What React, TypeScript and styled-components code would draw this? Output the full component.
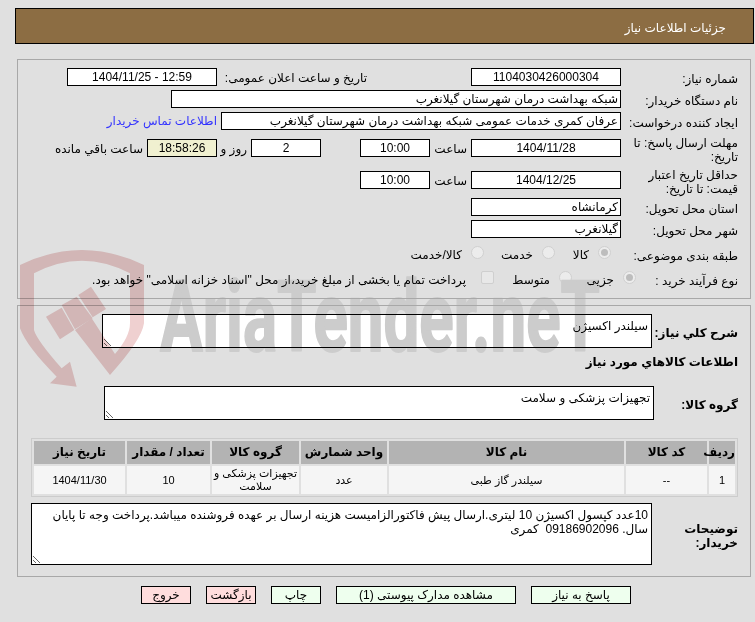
import React from 'react'
import styled, { createGlobalStyle } from 'styled-components'

const Global = createGlobalStyle`
  html, body { margin: 0; padding: 0; background: #e0e0e0; }
  body { font-family: "Liberation Sans", "DejaVu Sans", sans-serif; font-size: 12px; color: #000; }
  * { box-sizing: border-box; }
`

const Page = styled.div`
  position: relative;
  width: 755px;
  height: 622px;
  overflow: hidden;
  direction: rtl;
  padding: 8px 1px 0 15px;
`

// sits over the whole form, the fields show through it
const Watermark = styled.svg<{ $blend: string }>`
  position: absolute;
  left: 0;
  top: 0;
  width: 755px;
  height: 622px;
  pointer-events: none;
  mix-blend-mode: ${(p) => p.$blend};
`

const Header = styled.div`
  height: 36px;
  background: #8c6d43;
  border: 1px solid #000;
  color: #fff;
  line-height: 38px;
  padding-right: 27px;
`

const Panel = styled.div`
  margin: 15px 3px 0 2px;
  border: 1px solid #a8a8a8;
  padding: 8px 12px 0 0;
  height: 240px;
`

const LowerPanel = styled(Panel)`
  margin-top: 6px;
  height: 272px;
`

const Row = styled.div<{ $h?: number; $mt?: number }>`
  display: flex;
  align-items: center;
  height: ${(p) => p.$h ?? 18}px;
  margin-top: ${(p) => p.$mt ?? 4}px;
  &:first-child { margin-top: 0; }
`

const Label = styled.div<{ $w?: number; $bold?: boolean }>`
  flex: none;
  width: ${(p) => p.$w ?? 117}px;
  font-weight: ${(p) => (p.$bold ? 700 : 400)};
  line-height: 14px;
  padding-top: 3px;
`

const Field = styled.div<{ $w: number; $center?: boolean; $bg?: string; $mr?: number }>`
  flex: none;
  width: ${(p) => p.$w}px;
  height: 18px;
  margin-right: ${(p) => p.$mr ?? 0}px;
  border: 1px solid #000;
  background: ${(p) => p.$bg ?? '#fff'};
  line-height: 16px;
  padding: 0 2px;
  text-align: ${(p) => (p.$center ? 'center' : 'right')};
  white-space: nowrap;
  overflow: hidden;
`

const Inline = styled.div<{ $w: number; $mr?: number }>`
  flex: none;
  width: ${(p) => p.$w}px;
  margin-right: ${(p) => p.$mr ?? 0}px;
  padding: 2px 4px 0 0;
  white-space: nowrap;
`

const ContactLink = styled.a`
  margin-right: 4px;
  color: #3333ff;
  white-space: nowrap;
`

const Option = styled.label<{ $w: number; $gap?: number }>`
  flex: none;
  width: ${(p) => p.$w}px;
  display: flex;
  align-items: center;
  gap: ${(p) => p.$gap ?? 9}px;
  padding-top: 2px;
  white-space: nowrap;
`

const Radio = styled.input.attrs({ type: 'radio', disabled: true })`
  appearance: none;
  flex: none;
  position: relative;
  width: 13px;
  height: 13px;
  margin: 0 0 6px;
  border: 1px solid #d0d0d0;
  border-radius: 50%;
  background: #ececec;
  &:checked::after {
    content: '';
    position: absolute;
    inset: 2px;
    border-radius: 50%;
    background: #bdbdbd;
  }
`

const Check = styled.input.attrs({ type: 'checkbox', disabled: true })`
  appearance: none;
  flex: none;
  width: 13px;
  height: 13px;
  margin: 0 0 6px;
  border: 1px solid #cfcfcf;
  border-radius: 2px;
  background: #e8e8e8;
`

const Note = styled.textarea.attrs({ readOnly: true })<{ $w: number; $h: number }>`
  flex: none;
  display: block;
  width: ${(p) => p.$w}px;
  height: ${(p) => p.$h}px;
  border: 1px solid #000;
  border-radius: 0;
  background: #fff;
  padding: 4px 3px;
  font: inherit;
  line-height: 14px;
  color: #000;
  overflow: hidden;
  outline: none;
`

const SectionTitle = styled.div`
  margin-top: 6px;
  height: 16px;
  line-height: 16px;
  font-weight: 700;
`

const Items = styled.table`
  width: 707px;
  margin-top: 18px;
  table-layout: fixed;
  border-collapse: separate;
  border-spacing: 2px;
  border: 1px solid #cccccc;
  line-height: 13px;
  th {
    height: 23px;
    padding: 0;
    background: #b3b3b3;
    font-weight: 700;
  }
  td {
    height: 28px;
    padding: 0;
    background: #f5f5f5;
    font-size: 11px;
    text-align: center;
    white-space: pre;
  }
`

const Footer = styled.div`
  display: flex;
  gap: 15px;
  margin-top: 9px;
  padding-right: 123px;
`

const ActionButton = styled.button<{ $w: number; $danger?: boolean }>`
  width: ${(p) => p.$w}px;
  height: 18px;
  padding: 0;
  border: 1px solid #000;
  border-radius: 0;
  background: ${(p) => (p.$danger ? '#ffdddd' : '#eeffee')};
  font: inherit;
  color: #000;
  white-space: nowrap;
`

const columns = [26, 81, 235, 86, 87, 83, 91]
const heads = ['ردیف', 'کد کالا', 'نام کالا', 'واحد شمارش', 'گروه کالا', 'تعداد / مقدار', 'تاریخ نیاز']
const cells = ['1', '--', 'سیلندر گاز طبی', 'عدد', 'تجهیزات پزشکی و\nسلامت', '10', '1404/11/30']

export default function App() {
  return (
    <Page>
      <Global />
      <Header>جزئیات اطلاعات نیاز</Header>
      <Panel>
        <Row>
          <Label>شماره نیاز:</Label>
          <Field $w={150} $center>1104030426000304</Field>
          <Inline $w={154} $mr={100}>تاریخ و ساعت اعلان عمومی:</Inline>
          <Field $w={150} $center>12:59 - 1404/11/25</Field>
        </Row>
        <Row>
          <Label>نام دستگاه خریدار:</Label>
          <Field $w={450}>شبکه بهداشت درمان شهرستان گیلانغرب</Field>
        </Row>
        <Row>
          <Label>ایجاد کننده درخواست:</Label>
          <Field $w={400}>عرفان کمری خدمات عمومی شبکه بهداشت درمان شهرستان گیلانغرب</Field>
          <ContactLink>اطلاعات تماس خریدار</ContactLink>
        </Row>
        <Row $h={32} $mt={2}>
          <Label>مهلت ارسال پاسخ: تا تاریخ:</Label>
          <Field $w={150} $center>1404/11/28</Field>
          <Inline $w={41}>ساعت</Inline>
          <Field $w={70} $center>10:00</Field>
          <Field $w={70} $center $mr={39}>2</Field>
          <Inline $w={34}>روز و</Inline>
          <Field $w={70} $center $bg="#f0f0d0">18:58:26</Field>
          <Inline $w={94}>ساعت باقي مانده</Inline>
        </Row>
        <Row $h={32} $mt={0}>
          <Label>حداقل تاریخ اعتبار قیمت: تا تاریخ:</Label>
          <Field $w={150} $center>1404/12/25</Field>
          <Inline $w={41}>ساعت</Inline>
          <Field $w={70} $center>10:00</Field>
        </Row>
        <Row $mt={2}>
          <Label>استان محل تحویل:</Label>
          <Field $w={150}>کرمانشاه</Field>
        </Row>
        <Row>
          <Label>شهر محل تحویل:</Label>
          <Field $w={150}>گیلانغرب</Field>
        </Row>
        <Row $mt={7}>
          <Label $w={127}>طبقه بندی موضوعی:</Label>
          <Option $w={56}><Radio defaultChecked name="kind" />کالا</Option>
          <Option $w={71}><Radio name="kind" />خدمت</Option>
          <Option $w={80}><Radio name="kind" />کالا/خدمت</Option>
        </Row>
        <Row $mt={7}>
          <Label $w={102}>نوع فرآیند خرید :</Label>
          <Option $w={64}><Radio defaultChecked name="process" />جزیی</Option>
          <Option $w={78}><Radio name="process" />متوسط</Option>
          <Option $w={400} $gap={15}>
            <Check />
            پرداخت تمام یا بخشی از مبلغ خرید،از محل "اسناد خزانه اسلامی" خواهد بود.
          </Option>
        </Row>
      </Panel>
      <LowerPanel>
        <Row $h={34}>
          <Label $w={86} $bold>شرح كلي نياز:</Label>
          <Note $w={550} $h={34} defaultValue="سیلندر اکسیژن" />
        </Row>
        <SectionTitle>اطلاعات كالاهاي مورد نياز</SectionTitle>
        <Row $h={34} $mt={16}>
          <Label $w={84} $bold>گروه کالا:</Label>
          <Note $w={550} $h={34} defaultValue="تجهیزات پزشکی و سلامت" />
        </Row>
        <Items>
          <colgroup>
            {columns.map((w, i) => <col key={i} width={w} />)}
          </colgroup>
          <thead>
            <tr>{heads.map((h) => <th key={h}>{h}</th>)}</tr>
          </thead>
          <tbody>
            <tr>{cells.map((c) => <td key={c}>{c}</td>)}</tr>
          </tbody>
        </Items>
        <Row $h={62} $mt={6}>
          <Label $w={86} $bold>توضیحات خریدار:</Label>
          <Note
            $w={621}
            $h={62}
            defaultValue="10عدد کپسول اکسیژن 10 لیتری.ارسال پیش فاکتورالزامیست هزینه ارسال بر عهده فروشنده میباشد.پرداخت وجه تا پایان سال. 09186902096  کمری"
          />
        </Row>
      </LowerPanel>
      <Footer>
        <ActionButton $w={100}>پاسخ به نیاز</ActionButton>
        <ActionButton $w={180}>مشاهده مدارک پیوستی (1)</ActionButton>
        <ActionButton $w={50}>چاپ</ActionButton>
        <ActionButton $w={50} $danger>بازگشت</ActionButton>
        <ActionButton $w={50} $danger>خروج</ActionButton>
      </Footer>
      <Watermark viewBox="0 0 755 622" $blend="multiply">
        <g transform="translate(10 240) scale(0.3333)" fill="#efd0d0">
          <path d="M30 75 Q215 -15 402 75 L402 250 Q395 300 300 405 L195 270 L245 235 L315 342 Q360 290 360 250 L360 100 Q215 25 72 100 L72 270 Q80 300 155 385 L180 365 L200 440 L120 430 L140 410 Q50 320 30 265 Z" />
          <path d="M108 230 L155 203 L193 270 L150 298 Z" />
          <path d="M155 195 L200 170 L248 235 L195 268 Z" />
          <path d="M205 165 L243 140 L288 207 L248 232 Z" />
        </g>
      </Watermark>
      <Watermark viewBox="0 0 755 622" $blend="darken">
        <text
          x="160"
          y="351"
          direction="ltr"
          textLength="440"
          lengthAdjust="spacingAndGlyphs"
          fontFamily="Roboto, sans-serif"
          fontWeight="700"
          fontSize="98"
          fill="#cccccc"
          stroke="#cccccc"
          strokeWidth="2"
          strokeLinejoin="round"
        >
          AriaTender.neT
        </text>
      </Watermark>
    </Page>
  )
}
